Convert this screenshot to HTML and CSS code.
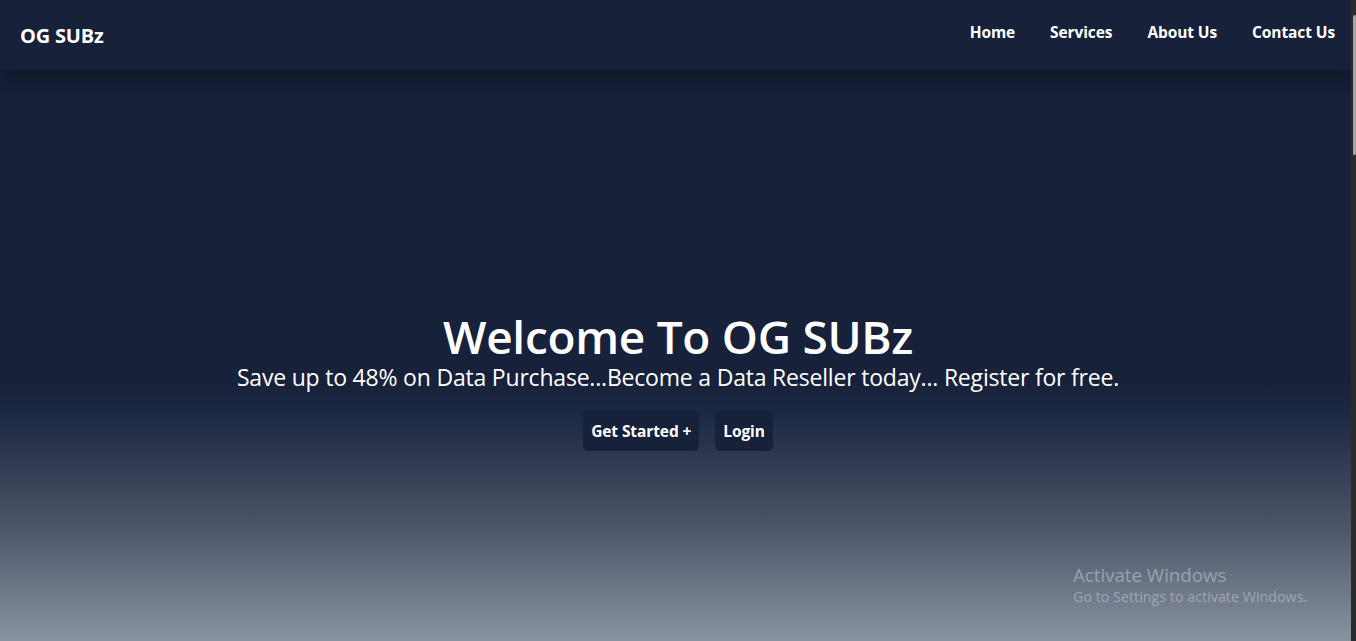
FILE: index.html
```
<!DOCTYPE html>
<html lang="en">
<head>
<meta charset="utf-8">
<title>OG SUBz</title>
<link rel="stylesheet" href="styles.css">
</head>
<body>
<header class="site-header">
  <a class="logo" href="#">OG SUBz</a>
  <nav class="nav">
    <a href="#">Home</a>
    <a href="#">Services</a>
    <a href="#">About Us</a>
    <a href="#">Contact Us</a>
  </nav>
</header>
<main>
  <section class="hero">
    <h1 class="hero-title">Welcome To OG SUBz</h1>
    <p class="hero-sub">Save up to 48% on Data Purchase...Become a Data Reseller today... Register for free.</p>
    <div class="hero-actions">
      <a class="btn" href="#">Get Started +</a>
      <a class="btn" href="#">Login</a>
    </div>
    <div class="activate">
      <div class="activate-title">Activate Windows</div>
      <div class="activate-text">Go to Settings to activate Windows.</div>
    </div>
  </section>
  <section class="section services"></section>
  <section class="section about"></section>
  <section class="section contact"></section>
</main>
<div class="scrollbar"><div class="scroll-thumb"></div></div>
</body>
</html>
```
FILE: styles.css
```
html, body {
  margin: 0;
  padding: 0;
}
body {
  font-family: "Open Sans", "Noto Sans", sans-serif;
  background: #172139;
  color: #fff;
}
a {
  color: #fff;
  text-decoration: none;
}
.site-header {
  position: relative;
  z-index: 2;
  height: 70px;
  display: flex;
  align-items: center;
  justify-content: space-between;
  padding: 0 21px 0 20px;
  background: #172139;
  box-shadow: 0 8px 22px rgba(5, 10, 20, 0.45);
}
.logo {
  font-size: 20px;
  font-weight: 700;
  letter-spacing: -0.2px;
  margin-top: 1px;
}
.nav {
  display: flex;
  gap: 35px;
  margin-top: -6px;
}
.nav a {
  font-size: 15.5px;
  font-weight: 700;
  letter-spacing: -0.1px;
}
.hero {
  position: relative;
  height: 571px;
  box-sizing: border-box;
  padding-top: 240px;
  display: flex;
  flex-direction: column;
  align-items: center;
  background: linear-gradient(180deg, #172139 0%, #172139 54%, #1c2741 60%, #4b5669 80%, #8892a1 100%);
}
.hero-title {
  margin: 0;
  font-size: 46px;
  font-weight: 600;
  line-height: 52px;
  letter-spacing: -0.3px;
}
.hero-sub {
  margin: 0;
  font-size: 23px;
  line-height: 30px;
  letter-spacing: -0.2px;
}
.hero-actions {
  display: flex;
  gap: 16px;
  margin-top: 19px;
}
.btn {
  display: flex;
  align-items: center;
  height: 40px;
  padding: 0 8px;
  border-radius: 5px;
  background: #172139;
  font-size: 15.5px;
  font-weight: 700;
  letter-spacing: -0.1px;
}
.activate {
  position: absolute;
  left: 1073px;
  top: 493px;
  color: rgba(200, 205, 215, 0.55);
}
.activate-title {
  font-size: 18.7px;
  line-height: 24px;
}
.activate-text {
  font-size: 14.3px;
  line-height: 20px;
}
.section {
  min-height: 740px;
  background: #f4f5f8;
}
.scrollbar {
  position: fixed;
  top: 0;
  right: 0;
  bottom: 0;
  width: 5px;
  background: #2c2c2c;
  z-index: 10;
}
.scroll-thumb {
  position: absolute;
  top: 15px;
  right: 0;
  width: 3px;
  height: 140px;
  border-radius: 2px;
  background: #a3a3a3;
}
```
